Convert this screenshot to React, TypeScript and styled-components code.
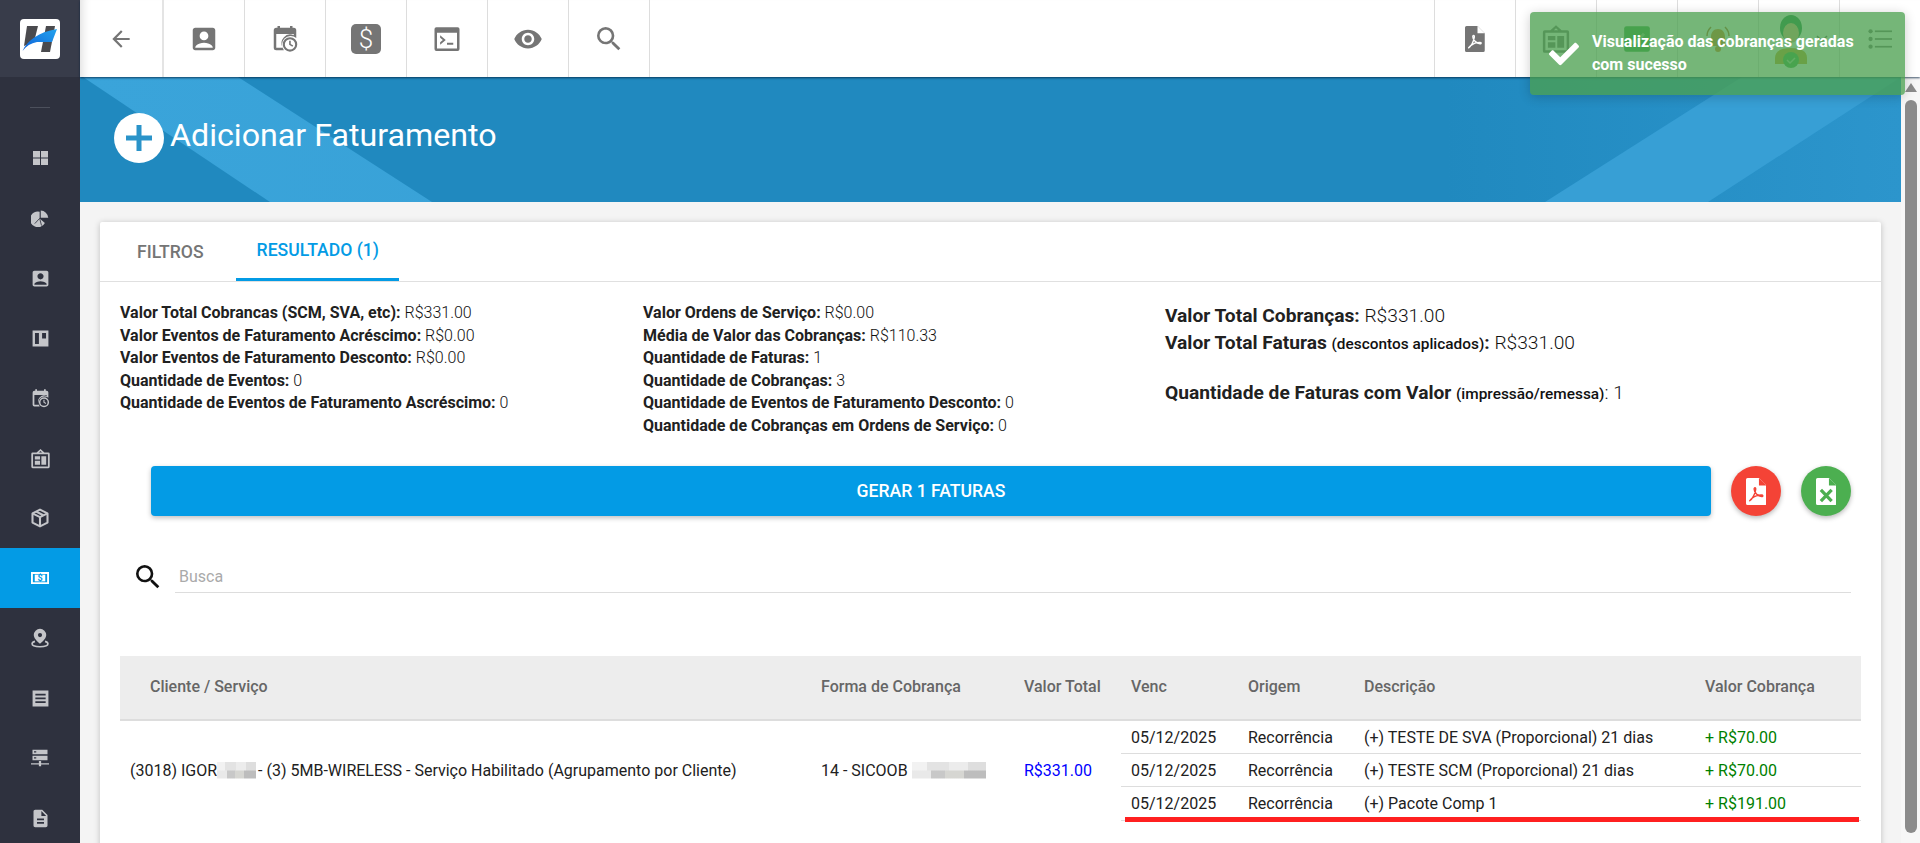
import React from "react";
import styled, { createGlobalStyle } from "styled-components";
import { MdArrowBack, MdAccountBox, MdVisibility, MdSearch, MdDescription } from "react-icons/md";
import { FaCheck } from "react-icons/fa";

const Global = createGlobalStyle`
  html, body { margin: 0; padding: 0; height: 100%; overflow: hidden; }
  body { font-family: Roboto, "Liberation Sans", sans-serif; color: #212121; background: #f4f4f4; }
  * { box-sizing: border-box; }
`;

const Shell = styled.div`
  display: grid;
  grid-template-columns: 80px 1fr;
  width: 1920px;
  height: 843px;
  overflow: hidden;
  position: relative;
`;

const Sidebar = styled.aside`
  background: #2e313e;
  display: flex;
  flex-direction: column;
  height: 843px;
  overflow: hidden;
`;
const Brand = styled.div`
  height: 77px;
  flex: none;
  background: #383c4a;
  display: flex;
  align-items: center;
  justify-content: center;
`;
const LogoBox = styled.div`
  width: 40px;
  height: 40px;
  background: #fff;
  border-radius: 4px;
  display: flex;
`;
const SideDivider = styled.div`
  flex: none;
  height: 51px;
  display: flex;
  align-items: center;
  justify-content: center;
  padding-top: 9px;
  &::after { content: ""; width: 20px; height: 1px; background: #4c505c; }
`;
const SideItem = styled.div<{ $active?: boolean }>`
  flex: none;
  height: 60px;
  display: flex;
  align-items: center;
  justify-content: center;
  color: ${(p) => (p.$active ? "#fff" : "#c4c5c9")};
  background: ${(p) => (p.$active ? "#039be5" : "transparent")};
`;

const Column = styled.div`
  display: flex;
  flex-direction: column;
  min-width: 0;
  height: 843px;
`;
const Topbar = styled.header`
  height: 77px;
  flex: none;
  background: #fff;
  display: flex;
  justify-content: space-between;
  position: relative;
  z-index: 2;
  box-shadow: 0 1px 2px rgba(0, 30, 60, 0.75), inset 10px 0 10px -8px rgba(0, 0, 0, 0.14);
`;
const ToolGroup = styled.div`
  display: flex;
`;
const ToolBtn = styled.div<{ $wide?: boolean }>`
  width: ${(p) => (p.$wide ? "84px" : "81px")};
  height: 77px;
  display: flex;
  align-items: center;
  justify-content: center;
  color: #757575;
  border-right: ${(p) => (p.$wide ? "2px solid #e4e4e4" : "1px solid #ddd")};
`;
const ToolBtnRight = styled(ToolBtn)`
  border-right: none;
  border-left: 1px solid #ddd;
`;
const DollarIcon = styled.div`
  width: 30px;
  height: 30px;
  border-radius: 5px;
  background: #757575;
  color: #fff;
  font-size: 26px;
  font-weight: 300;
  display: flex;
  align-items: center;
  justify-content: center;
`;

const Body = styled.div`
  flex: 1;
  min-height: 0;
  display: flex;
`;
const Main = styled.main`
  flex: 1;
  min-width: 0;
  overflow: hidden;
  background: #f4f4f4;
`;
const Scrollbar = styled.div`
  width: 19px;
  flex: none;
  background: #f7f7f7;
  display: flex;
  flex-direction: column;
  align-items: center;
  padding: 6px 0 0;
`;
const ScrollUp = styled.div`
  width: 0;
  height: 0;
  border-left: 6px solid transparent;
  border-right: 6px solid transparent;
  border-bottom: 9px solid #8b8b8b;
`;
const ScrollThumb = styled.div`
  width: 12px;
  height: 733px;
  margin-top: 8px;
  border-radius: 6px;
  background: #8b8b8b;
`;

const Hero = styled.section`
  height: 125px;
  position: relative;
  overflow: hidden;
  background: linear-gradient(90deg, #2089bf 75%, #2c95cc 100%);
  display: flex;
  align-items: center;
  padding: 0 0 3px 34px;
  color: #fff;
  &::before, &::after {
    content: "";
    position: absolute;
    inset: 0;
    background: linear-gradient(90deg, #3aa4da, #349bd0);
  }
  &::before { clip-path: polygon(3px 0, 158px 0, 352px 100%, 190px 100%); }
  &::after { clip-path: polygon(1662px 0, 1821px 0, 1628px 100%, 1465px 100%); background: #379fd5; }
`;
const HeroContent = styled.div`
  display: flex;
  align-items: center;
  gap: 6px;
  position: relative;
  z-index: 1;
`;
const PlusCircle = styled.div`
  width: 50px;
  height: 50px;
  border-radius: 50%;
  background: #fff;
  color: #2a93c9;
  display: flex;
  align-items: center;
  justify-content: center;
`;
const HeroTitle = styled.h1`
  margin: -6px 0 0;
  font-size: 32.2px;
  font-weight: 400;
`;

const Card = styled.section`
  margin: 20px 20px 0 20px;
  background: #fff;
  box-shadow: 0 1px 6px rgba(0, 0, 0, 0.22);
  border-radius: 2px;
  padding-bottom: 40px;
`;
const Tabs = styled.nav`
  height: 60px;
  display: flex;
  border-bottom: 1px solid #e0e0e0;
`;
const Tab = styled.div<{ $active?: boolean }>`
  height: 59px;
  padding: 0 ${(p) => (p.$active ? "20px" : "32px")} 0 ${(p) => (p.$active ? "21px" : "37px")};
  display: flex;
  align-items: center;
  font-size: 17.6px;
  font-weight: 500;
  color: ${(p) => (p.$active ? "#039be5" : "#757575")};
  border-bottom: ${(p) => (p.$active ? "3px solid #039be5" : "none")};
`;
const Content = styled.div`
  padding: 20px 20px 0;
`;
const Stats = styled.div`
  display: grid;
  grid-template-columns: 523px 522px 1fr;
  font-size: 16px;
  line-height: 22.5px;
  font-weight: 300;
  height: 135px;
  color: #111;
`;
const StatLine = styled.div`
  white-space: nowrap;
  b { font-weight: 700; color: #212121; }
`;
const BigStats = styled.div`
  font-size: 19.2px;
  line-height: 27px;
`;
const BigLine = styled.div<{ $gap?: boolean }>`
  white-space: nowrap;
  margin-top: ${(p) => (p.$gap ? "21px" : "0")};
  b { font-weight: 700; color: #212121; }
  small { font-size: 15.4px; font-weight: 500; }
`;
const Actions = styled.div`
  display: flex;
  align-items: center;
  gap: 20px;
  margin: 29px 10px 0 31px;
`;
const GenerateBtn = styled.button`
  flex: 1;
  height: 50px;
  border: none;
  border-radius: 4px;
  background: #039be5;
  color: #fff;
  font: 500 17.6px Roboto, sans-serif;
  box-shadow: 0 2px 5px rgba(0, 0, 0, 0.25);
`;
const RoundBtn = styled.div<{ $color: string }>`
  width: 50px;
  height: 50px;
  border-radius: 50%;
  background: ${(p) => p.$color};
  display: flex;
  align-items: center;
  justify-content: center;
  box-shadow: 0 2px 5px rgba(0, 0, 0, 0.28);
`;
const SearchRow = styled.div`
  display: flex;
  align-items: center;
  margin: 44px 10px 0 12px;
  gap: 11px;
  color: #111;
`;
const SearchField = styled.div`
  flex: 1;
  height: 33px;
  border-bottom: 1px solid #ddd;
  padding-left: 4px;
  font-size: 16px;
  line-height: 33px;
  color: #aaa;
`;
const Table = styled.div`
  margin-top: 63px;
  position: relative;
`;
const HeadRow = styled.div`
  display: grid;
  grid-template-columns: 701px 203px 97px 117px 116px 341px 1fr;
  height: 65px;
  padding-bottom: 2px;
  background: #ededed;
  border-bottom: 2px solid #ddd;
  align-items: center;
  font-size: 16px;
  font-weight: 500;
  color: #666;
`;
const HeadCell = styled.div<{ $pad?: number }>`
  padding-left: ${(p) => p.$pad ?? 0}px;
`;
const DataRow = styled.div`
  display: grid;
  grid-template-columns: 701px 203px 97px 1fr;
  align-items: center;
  font-size: 16px;
  color: #212121;
  & > div:not(:last-child) { margin-top: -2px; }
`;
const ClientCell = styled.div`
  padding-left: 10px;
  white-space: nowrap;
  display: flex;
  align-items: center;
`;
const Plain = styled.div`
  display: flex;
  align-items: center;
  white-space: nowrap;
`;
const Censor = styled.span<{ $w: number }>`
  display: inline-block;
  width: ${(p) => p.$w}px;
  height: 17px;
  margin-right: 2px;
  background:
    linear-gradient(90deg, #f2f2f2 0 20%, #e3e3e3 20% 50%, #ececec 50% 75%, #dedede 75% 100%) top / 100% 50% no-repeat,
    linear-gradient(90deg, #e9e9e9 0 25%, #c8c8c8 25% 45%, #d6d6d2 45% 70%, #bdbdbd 70% 100%) bottom / 100% 50% no-repeat;
`;
const BlueValue = styled.div`
  color: #0000ff;
`;
const SubTable = styled.div`
  display: flex;
  flex-direction: column;
`;
const SubRow = styled.div<{ $last?: boolean }>`
  display: grid;
  grid-template-columns: 117px 116px 341px 1fr;
  height: ${(p) => (p.$last ? "34px" : "33px")};
  align-items: center;
  border-bottom: 1px solid #ddd;
`;
const SubCell = styled.div`
  padding-left: 10px;
  white-space: nowrap;
`;
const GreenCell = styled(SubCell)`
  color: #008000;
`;
const Highlight = styled.div`
  position: absolute;
  left: 1005px;
  bottom: -1px;
  width: 734px;
  height: 5px;
  background: #ff2020;
`;
const Toast = styled.div`
  position: absolute;
  left: 1530px;
  top: 12px;
  width: 375px;
  height: 83px;
  z-index: 5;
  border-radius: 4px;
  background: rgba(76, 160, 80, 0.77);
  box-shadow: 0 2px 12px rgba(0, 0, 0, 0.2);
  color: #fff;
  display: flex;
  align-items: flex-start;
  padding: 18px 16px 0 19px;
  gap: 13px;
  font-size: 16px;
  font-weight: 700;
  line-height: 23px;
`;
const ToastIcon = styled.div`
  margin-top: 9px;
  flex: none;
  display: flex;
`;
const AvatarSvg = styled.svg`
  align-self: flex-start;
  margin: 14px 0 0 6px;
  overflow: visible;
`;
const ChevronSvg = styled.svg`
  margin-left: 8px;
`;

const CalendarClock = ({ s = 30 }: { s?: number }) => (
  <svg width={s} height={s} viewBox="0 0 24 24" fill="currentColor">
    <path d="M6 1.500h2V3h8V1.500h2V3h1a2 2 0 0 1 2 2v6.200A7 7 0 0 0 11.100 21H5a2 2 0 0 1-2-2V5a2 2 0 0 1 2-2h1V1.500zM5 8v11h5.200A7 7 0 0 1 19 9V8H5z" />
    <path d="M16 10.500a5.800 5.800 0 1 0 0 11.600 5.800 5.800 0 0 0 0-11.600zm0 1.700a4.100 4.100 0 1 1 0 8.200 4.100 4.100 0 0 1 0-8.200zm-.7 1.200v3.200l2.600 1.600.7-1.100-2-1.200v-2.500h-1.300z" />
  </svg>
);
const TerminalBox = () => (
  <svg width="30" height="30" viewBox="0 0 24 24" fill="currentColor">
    <path d="M3.500 2.500h17a1.500 1.500 0 0 1 1.500 1.500v16a1.500 1.500 0 0 1-1.500 1.500h-17A1.500 1.500 0 0 1 2 20V4a1.500 1.500 0 0 1 1.500-1.500zM4 7v12.500h16V7H4z" />
    <path d="M6.500 9l4.500 3.700-4.500 3.800v-2l2.200-1.800-2.200-1.700V9zM12 15h5v1.600h-5z" />
  </svg>
);
const Badge = ({ s = 30 }: { s?: number }) => (
  <svg width={s} height={s} viewBox="0 0 24 24" fill="currentColor">
    <path d="M12 1l4.500 4H21a1.500 1.500 0 0 1 1.500 1.500v15A1.500 1.500 0 0 1 21 23H3a1.500 1.500 0 0 1-1.500-1.500v-15A1.500 1.500 0 0 1 3 5h4.500L12 1zm0 2.400L10.300 5h3.400L12 3.400zM3.500 7v14h17V7h-17z" />
    <path d="M5.500 9.500h6v3.500h-6zM5.500 14.500h6v4.500h-6zM13 9.500h5.500v9.500H13z" />
  </svg>
);
const WindowIcon = () => (
  <svg width="15" height="14" viewBox="0 0 15 14" fill="currentColor">
    <rect x="0" y="0" width="7" height="6.500" /><rect x="8" y="0" width="7" height="6.500" />
    <rect x="0" y="7.500" width="7" height="6.500" /><rect x="8" y="7.500" width="7" height="6.500" />
  </svg>
);
const PieIcon = () => (
  <svg width="18" height="18" viewBox="0 0 24 24" fill="currentColor">
    <path d="M11.500 3.500v9l7 6A10.500 10.500 0 1 1 11.500 3.500z" />
    <path d="M13 2a10.500 10.500 0 0 1 10 9.500H13V2z" />
    <path d="M11.500 12.500l-6.500 7M11.500 12.500l2.500 9.500" stroke="#2e313e" strokeWidth="1.100" fill="none" />
  </svg>
);
const BoardIcon = () => (
  <svg width="19" height="19" viewBox="0 0 24 24" fill="currentColor">
    <path d="M2 2h20v20H2V2zm3 3v14h5V5H5zm9 0v7h5V5h-5z" fillRule="evenodd" />
  </svg>
);
const CubeIcon = () => (
  <svg width="20" height="20" viewBox="0 0 24 24" fill="none" stroke="currentColor" strokeWidth="2.500" strokeLinejoin="round">
    <path d="M12 2l9 4.500v11L12 22l-9-4.500v-11L12 2z" />
    <path d="M3 6.500l9 4.500 9-4.500M12 11v11M7.500 4.300l9 4.700" />
  </svg>
);
const MoneyIcon = () => (
  <svg width="20" height="18" viewBox="0 0 26 24" fill="currentColor">
    <path fillRule="evenodd" d="M1 4h24v16H1V4zm2.500 2.500v11h19v-11h-19z" />
    <rect x="6" y="7.500" width="14" height="9" />
    <text x="13" y="16.200" fontSize="12" fontWeight="700" textAnchor="middle" fill="#039be5" fontFamily="Roboto, sans-serif">$</text>
  </svg>
);
const PinIcon = () => (
  <svg width="20" height="20" viewBox="0 0 24 24" fill="currentColor">
    <path fillRule="evenodd" d="M12 1a7.500 7.500 0 0 0-7.500 7.500C4.500 13.500 12 19 12 19s7.500-5.500 7.500-10.500A7.500 7.500 0 0 0 12 1zm0 5a2.500 2.500 0 1 1 0 5 2.500 2.500 0 0 1 0-5z" />
    <path d="M6 16c-2 .5-3.500 1.500-3.500 3C2.500 21.500 7 22.500 12 22.500s9.500-1 9.500-3.500c0-1.500-1.500-2.500-3.500-3" fill="none" stroke="currentColor" strokeWidth="2" />
  </svg>
);
const ReceiptIcon = () => (
  <svg width="19" height="19" viewBox="0 0 24 24" fill="currentColor">
    <path fillRule="evenodd" d="M2 2h20v20H2V2zm3.500 4v2.200h13V6h-13zm0 4.800V13h13v-2.200h-13zm0 4.800v2.200h13v-2.200h-13z" />
  </svg>
);
const ServerIcon = () => (
  <svg width="20" height="18" viewBox="0 0 26 24" fill="currentColor">
    <path fillRule="evenodd" d="M3 1h20v6H3V1zm2 2v1.500h3V3H5zM3 9h20v6H3V9zm2 2v1.500h3V11H5zM11.500 16h3v3H25v1.500H14.500V23h-3v-2.500H1V19h10.500v-3z" />
  </svg>
);
const GreenCheckBox = () => (
  <svg width="28" height="28" viewBox="0 0 24 24">
    <rect x="1" y="1" width="22" height="22" rx="2" fill="#39a845" />
    <path d="M6 12.500l4 4 8-9" stroke="#8fd08f" strokeWidth="2.500" fill="none" />
  </svg>
);
const Bell = () => (
  <svg width="32" height="32" viewBox="0 0 32 32">
    <path d="M16 6c4.500 0 7 3.500 7 8v6l2 3H7l2-3v-6c0-4.500 2.500-8 7-8z" fill="#e07f2a" />
    <circle cx="16" cy="26" r="3" fill="#e07f2a" />
    <path d="M5 13c0-4 2-7 4-9M27 13c0-4-2-7-4-9" stroke="#b5652a" strokeWidth="1.500" fill="none" />
  </svg>
);
const Avatar = () => (
  <AvatarSvg width="32" height="56" viewBox="0 0 32 56">
    <path d="M0 44c0-7 6-10 16-10s16 3 16 10v6H0z" fill="#c9a52d" />
    <ellipse cx="16" cy="14" rx="11" ry="13" fill="#1f8a4a" />
    <ellipse cx="16" cy="19" rx="8" ry="10" fill="#e9b48c" />
    <circle cx="16" cy="46" r="8" fill="#3fae49" />
    <path d="M12 46l3 3 5-5" stroke="#a8dca8" strokeWidth="1.500" fill="none" />
  </AvatarSvg>
);
const Chevron = () => (
  <ChevronSvg width="14" height="14" viewBox="0 0 14 14">
    <path d="M2 4l5 5 5-5" stroke="#666" strokeWidth="1.500" fill="none" />
  </ChevronSvg>
);
const ListIcon = () => (
  <svg width="24" height="24" viewBox="0 0 28 28" fill="#757575">
    <circle cx="3" cy="5" r="2.500" /><circle cx="3" cy="14" r="2.500" /><circle cx="3" cy="23" r="2.500" />
    <rect x="8" y="4" width="20" height="2" /><rect x="8" y="13" width="20" height="2" /><rect x="8" y="22" width="20" height="2" />
  </svg>
);
const PlusIcon = () => (
  <svg width="26" height="26" viewBox="0 0 26 26" fill="currentColor">
    <rect x="10.500" y="0" width="5" height="26" /><rect x="0" y="10.500" width="26" height="5" />
  </svg>
);
const Logo = () => (
  <svg width="40" height="40" viewBox="0 0 40 40">
    <defs>
      <linearGradient id="swoosh" x1="0" y1="1" x2="1" y2="0">
        <stop offset="0" stopColor="#0d5fd8" />
        <stop offset="1" stopColor="#23a3ee" />
      </linearGradient>
    </defs>
    <path d="M7 7h11l-4 16-10 4L7 7z" fill="#4a4a4e" />
    <path d="M26 7h9l-5 26h-9l5-26z" fill="#4a4a4e" />
    <path d="M2.500 32C7 22 18 13 37 10l-5 13H17C11 24 6 27 2.500 32z" fill="url(#swoosh)" />
  </svg>
);
const PdfFile = ({ s, fill, mark }: { s: number; fill: string; mark: string }) => (
  <svg width={s * 0.76} height={s} viewBox="0 0 19 25">
    <path d="M1.500 0H12l7 7v16.500a1.500 1.500 0 0 1-1.500 1.500h-16A1.500 1.500 0 0 1 0 23.500v-22A1.500 1.500 0 0 1 1.500 0z" fill={fill} />
    <path d="M12 0l7 7h-7z" fill={mark} />
    <path d="M3.500 21c2-1 5-6 5.500-10.500.2-2-1.500-2-1.500-.2 0 3 3.500 6.500 7 6.800 1.500.1 1.500-1.300-.2-1.300-3 0-6.500 1.200-9 3.200-1.200 1-2 2.400-1.800 2z" fill="none" stroke={mark} strokeWidth="1.300" />
  </svg>
);
const XlsFile = ({ s, fill, mark }: { s: number; fill: string; mark: string }) => (
  <svg width={s * 0.76} height={s} viewBox="0 0 19 25">
    <path d="M1.500 0H12l7 7v16.500a1.500 1.500 0 0 1-1.500 1.500h-16A1.500 1.500 0 0 1 0 23.500v-22A1.500 1.500 0 0 1 1.500 0z" fill={fill} />
    <path d="M12 0l7 7h-7z" fill={mark} />
    <path d="M4.500 11l10 10.500M14.500 11l-10 10.500" stroke={mark} strokeWidth="3" fill="none" />
  </svg>
);

const sideItems: React.ReactNode[] = [
  <WindowIcon />, <PieIcon />, <MdAccountBox size={21} />, <BoardIcon />, <CalendarClock s={21} />, <Badge s={21} />,
  <CubeIcon />, <MoneyIcon />, <PinIcon />, <ReceiptIcon />, <ServerIcon />, <MdDescription size={21} />,
];

const leftStats: [string, string][] = [
  ["Valor Total Cobrancas (SCM, SVA, etc):", "R$331.00"],
  ["Valor Eventos de Faturamento Acréscimo:", "R$0.00"],
  ["Valor Eventos de Faturamento Desconto:", "R$0.00"],
  ["Quantidade de Eventos:", "0"],
  ["Quantidade de Eventos de Faturamento Ascréscimo:", "0"],
];
const midStats: [string, string][] = [
  ["Valor Ordens de Serviço:", "R$0.00"],
  ["Média de Valor das Cobranças:", "R$110.33"],
  ["Quantidade de Faturas:", "1"],
  ["Quantidade de Cobranças:", "3"],
  ["Quantidade de Eventos de Faturamento Desconto:", "0"],
  ["Quantidade de Cobranças em Ordens de Serviço:", "0"],
];
const charges = [
  ["(+) TESTE DE SVA (Proporcional) 21 dias", "+ R$70.00"],
  ["(+) TESTE SCM (Proporcional) 21 dias", "+ R$70.00"],
  ["(+) Pacote Comp 1", "+ R$191.00"],
];

export default function App() {
  return (
    <Shell>
      <Global />
      <Sidebar>
        <Brand><LogoBox><Logo /></LogoBox></Brand>
        <SideDivider />
        {sideItems.map((icon, i) => (
          <SideItem key={i} $active={i === 7}>{icon}</SideItem>
        ))}
      </Sidebar>
      <Column>
        <Topbar>
          <ToolGroup>
            <ToolBtn $wide><MdArrowBack size={26} /></ToolBtn>
            <ToolBtn><MdAccountBox size={30} /></ToolBtn>
            <ToolBtn><CalendarClock /></ToolBtn>
            <ToolBtn><DollarIcon>$</DollarIcon></ToolBtn>
            <ToolBtn><TerminalBox /></ToolBtn>
            <ToolBtn><MdVisibility size={30} /></ToolBtn>
            <ToolBtn><MdSearch size={32} /></ToolBtn>
          </ToolGroup>
          <ToolGroup>
            <ToolBtnRight><PdfFile s={26} fill="#757575" mark="#fff" /></ToolBtnRight>
            <ToolBtnRight><Badge /></ToolBtnRight>
            <ToolBtnRight><GreenCheckBox /></ToolBtnRight>
            <ToolBtnRight><Bell /></ToolBtnRight>
            <ToolBtnRight><Avatar /><Chevron /></ToolBtnRight>
            <ToolBtnRight><ListIcon /></ToolBtnRight>
          </ToolGroup>
        </Topbar>
        <Body>
          <Main>
            <Hero>
              <HeroContent>
                <PlusCircle><PlusIcon /></PlusCircle>
                <HeroTitle>Adicionar Faturamento</HeroTitle>
              </HeroContent>
            </Hero>
            <Card>
              <Tabs>
                <Tab>FILTROS</Tab>
                <Tab $active>RESULTADO (1)</Tab>
              </Tabs>
              <Content>
                <Stats>
                  <div>
                    {leftStats.map(([k, v]) => <StatLine key={k}><b>{k}</b> {v}</StatLine>)}
                  </div>
                  <div>
                    {midStats.map(([k, v]) => <StatLine key={k}><b>{k}</b> {v}</StatLine>)}
                  </div>
                  <BigStats>
                    <BigLine><b>Valor Total Cobranças:</b> R$331.00</BigLine>
                    <BigLine><b>Valor Total Faturas</b> <small>(descontos aplicados)</small><b>:</b> R$331.00</BigLine>
                    <BigLine $gap><b>Quantidade de Faturas com Valor</b> <small>(impressão/remessa)</small>: 1</BigLine>
                  </BigStats>
                </Stats>
                <Actions>
                  <GenerateBtn>GERAR 1 FATURAS</GenerateBtn>
                  <RoundBtn $color="#f44336"><PdfFile s={27} fill="#fff" mark="#f44336" /></RoundBtn>
                  <RoundBtn $color="#4caf50"><XlsFile s={27} fill="#fff" mark="#4caf50" /></RoundBtn>
                </Actions>
                <SearchRow>
                  <MdSearch size={32} />
                  <SearchField>Busca</SearchField>
                </SearchRow>
                <Table>
                  <HeadRow>
                    <HeadCell $pad={30}>Cliente / Serviço</HeadCell>
                    <HeadCell>Forma de Cobrança</HeadCell>
                    <HeadCell>Valor Total</HeadCell>
                    <HeadCell $pad={10}>Venc</HeadCell>
                    <HeadCell $pad={10}>Origem</HeadCell>
                    <HeadCell $pad={10}>Descrição</HeadCell>
                    <HeadCell $pad={10}>Valor Cobrança</HeadCell>
                  </HeadRow>
                  <DataRow>
                    <ClientCell>(3018) IGOR<Censor $w={39} />- (3) 5MB-WIRELESS - Serviço Habilitado (Agrupamento por Cliente)</ClientCell>
                    <Plain>14 - SICOOB&nbsp;<Censor $w={74} /></Plain>
                    <BlueValue>R$331.00</BlueValue>
                    <SubTable>
                      {charges.map(([d, v], i) => (
                        <SubRow key={i} $last={i === 2}>
                          <SubCell>05/12/2025</SubCell>
                          <SubCell>Recorrência</SubCell>
                          <SubCell>{d}</SubCell>
                          <GreenCell>{v}</GreenCell>
                        </SubRow>
                      ))}
                    </SubTable>
                  </DataRow>
                  <Highlight />
                </Table>
              </Content>
            </Card>
          </Main>
          <Scrollbar>
            <ScrollUp />
            <ScrollThumb />
          </Scrollbar>
        </Body>
      </Column>
      <Toast>
        <ToastIcon><FaCheck size={30} /></ToastIcon>
        <div>Visualização das cobranças geradas<br />com sucesso</div>
      </Toast>
    </Shell>
  );
}
